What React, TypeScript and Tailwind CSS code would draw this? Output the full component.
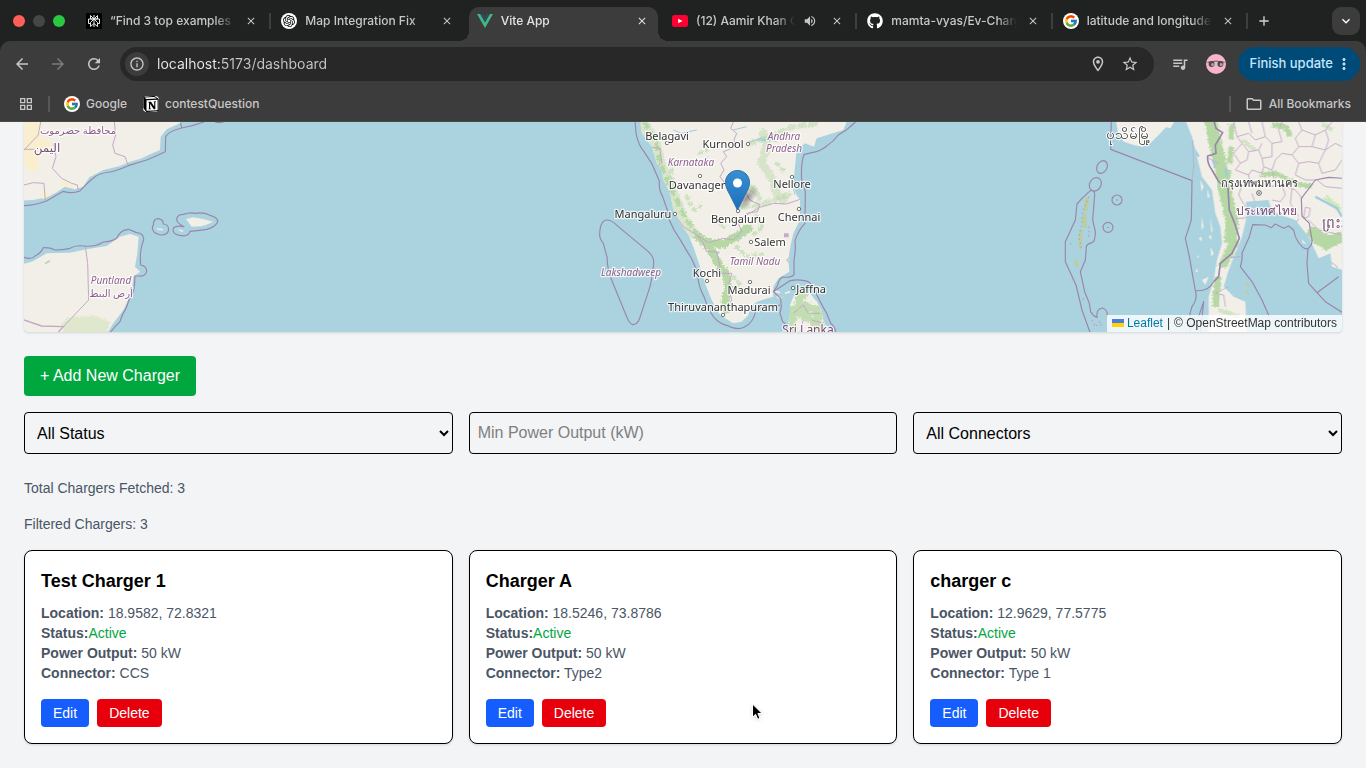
import React, { useState } from "react";
import {
  MdAdd,
  MdArrowBack,
  MdArrowForward,
  MdClose,
  MdExpandMore,
  MdInfoOutline,
  MdMoreVert,
  MdOutlineFolder,
  MdOutlineGridView,
  MdOutlineLocationOn,
  MdQueueMusic,
  MdRefresh,
  MdStarBorder,
  MdVolumeUp,
} from "react-icons/md";
import { FcGoogle } from "react-icons/fc";
import { FaGithub } from "react-icons/fa";
import { SiNotion, SiOpenai } from "react-icons/si";

/* ---------- Browser chrome ---------- */

function GoogleIcon() {
  return (
    <span className="flex size-4 shrink-0 items-center justify-center rounded-full bg-white">
      <FcGoogle className="size-3.5" />
    </span>
  );
}

function PerplexityIcon() {
  return (
    <svg viewBox="0 0 16 16" className="size-4 shrink-0">
      <rect width="16" height="16" rx="1" fill="#000" />
      <g fill="none" stroke="#e8e8e8" strokeWidth="1">
        <path d="M8 2v12M4.500 2.500 8 6l3.500-3.500V6h-7zM2.500 6h11v4.500h-2M4.500 10.500h-2V6M8 6l-3.500 3.500v4L8 10.500l3.500 3V9.500z" />
      </g>
    </svg>
  );
}

function VueIcon() {
  return (
    <svg viewBox="0 0 16 14" className="h-3.5 w-4 shrink-0">
      <path d="M0 0h3.200L8 8.300 12.800 0H16L8 14z" fill="#41b883" />
      <path d="M3.200 0h3L8 3.200 9.800 0h3L8 8.300z" fill="#35495e" />
    </svg>
  );
}

function YouTubeIcon() {
  return (
    <svg viewBox="0 0 16 12" className="h-3 w-4 shrink-0">
      <rect width="16" height="12" rx="2.500" fill="#ff0033" />
      <path d="M6.200 3.800v4.400L10.500 6z" fill="#fff" />
    </svg>
  );
}

type Tab = {
  title: string;
  icon: React.ReactNode;
  active?: boolean;
  audio?: boolean;
  divider?: boolean;
};

const tabs: Tab[] = [
  { title: "“Find 3 top examples of", icon: <PerplexityIcon />, divider: true },
  {
    title: "Map Integration Fix",
    icon: (
      <span className="flex size-4 shrink-0 items-center justify-center rounded-full bg-white">
        <SiOpenai className="size-3 text-black" />
      </span>
    ),
  },
  { title: "Vite App", icon: <VueIcon />, active: true },
  { title: "(12) Aamir Khan On", icon: <YouTubeIcon />, audio: true, divider: true },
  { title: "mamta-vyas/Ev-Charge", icon: <FaGithub className="size-4 shrink-0 text-white" />, divider: true },
  { title: "latitude and longitude", icon: <GoogleIcon />, divider: true },
];

function BrowserTab({ title, icon, active, audio, divider }: Tab) {
  return (
    <div className="flex min-w-0 flex-1 items-center">
      <div
        className={
          active
            ? "relative flex h-[34px] min-w-0 flex-1 items-center rounded-t-[10px] bg-[#3c3c3c] px-2 pb-[7px] text-[#e3e3e3]"
            : "flex h-[34px] min-w-0 flex-1 items-center px-2 pb-[7px] text-[#c7c7c7]"
        }
      >
        {active && (
          <>
            <span className="absolute bottom-0 right-full size-2.5 bg-[radial-gradient(circle_at_0_0,transparent_10px,#3c3c3c_10px)]" />
            <span className="absolute bottom-0 left-full size-2.5 bg-[radial-gradient(circle_at_100%_0,transparent_10px,#3c3c3c_10px)]" />
          </>
        )}
        {icon}
        <button className="mx-2 min-w-0 flex-1 overflow-hidden whitespace-nowrap text-left text-[12px] font-medium leading-4 [mask-image:linear-gradient(to_right,black_calc(100%-20px),transparent)]">
          {title}
        </button>
        {audio && (
          <button aria-label="Mute tab" className="mr-3 shrink-0">
            <MdVolumeUp className="size-3.5" />
          </button>
        )}
        <button aria-label={`Close ${title}`} className="flex size-4 shrink-0 items-center justify-center">
          <MdClose className="size-3" />
        </button>
      </div>
      <span className={divider ? "mx-0.5 mb-[7px] h-4 w-0.5 shrink-0 bg-[#3c3f3e]" : "w-1.5 shrink-0"} />
    </div>
  );
}

function BrowserChrome() {
  const [url, setUrl] = useState("localhost:5173/dashboard");
  return (
    <header className="bg-[#1f2221] font-['Inter',sans-serif]">
      <div className="flex h-[41px] items-end">
        <div className="flex w-[78px] shrink-0 gap-2 self-center pl-[13px]">
          <span className="size-3 rounded-full bg-[#ff5f57]" />
          <span className="size-3 rounded-full bg-[#464646]" />
          <span className="size-3 rounded-full bg-[#28c840]" />
        </div>
        <div className="flex min-w-0 flex-1">
          {tabs.map((t) => (
            <BrowserTab key={t.title} {...t} />
          ))}
        </div>
        <div className="flex w-[116px] shrink-0 items-center justify-between self-center pl-1.5 pr-1.5 text-[#d4d4d4]">
          <button aria-label="New tab">
            <MdAdd className="size-4" />
          </button>
          <button aria-label="Search tabs" className="flex size-7 items-center justify-center rounded-[9px] bg-[#3c3c3c] text-white">
            <MdExpandMore className="size-4" />
          </button>
        </div>
      </div>

      <div className="rounded-t-[10px] border-b border-[#4a4a4a] bg-[#3c3c3c] text-[#c7c7c7]">
        <div className="flex h-[46px] items-center pl-[13px] pr-1.5">
          <button aria-label="Back">
            <MdArrowBack className="size-[18px]" />
          </button>
          <button aria-label="Forward" className="ml-[18px] text-[#7b7b7b]">
            <MdArrowForward className="size-[18px]" />
          </button>
          <button aria-label="Reload" className="ml-[18px]">
            <MdRefresh className="size-[18px]" />
          </button>
          <div className="ml-[17px] flex h-[34px] min-w-0 flex-1 items-center rounded-full bg-[#282828] pl-[5px] pr-[15px]">
            <button aria-label="Site information" className="flex size-6 items-center justify-center rounded-full bg-[#3c3c3c]">
              <MdInfoOutline className="size-4" />
            </button>
            <input
              aria-label="Address"
              value={url}
              onChange={(e) => setUrl(e.target.value)}
              className="ml-2 min-w-0 flex-1 bg-[linear-gradient(90deg,#ececec_64px,#c7c7c7_64px)] bg-clip-text text-[14px] leading-5 text-transparent outline-none"
            />
            <button aria-label="Location access" className="mr-3.5">
              <MdOutlineLocationOn className="size-[18px]" />
            </button>
            <button aria-label="Bookmark this page">
              <MdStarBorder className="size-[18px]" />
            </button>
          </div>
          <button aria-label="Media controls" className="ml-[17px]">
            <MdQueueMusic className="size-[18px]" />
          </button>
          <button aria-label="Profile" className="ml-[17px]">
            <svg viewBox="0 0 20 20" className="size-5">
              <circle cx="10" cy="10" r="10" fill="#f8b4cb" />
              <path d="M1.500 8.300Q10 5.800 18.500 8.300" fill="none" stroke="#4b3b40" strokeWidth="0.800" />
              <circle cx="5.600" cy="10" r="3" fill="#4a4a4a" />
              <circle cx="14.400" cy="10" r="3" fill="#4a4a4a" />
              <circle cx="6.600" cy="10.500" r="1.500" fill="#a8a8a8" />
              <circle cx="15.200" cy="10.500" r="1.500" fill="#a8a8a8" />
            </svg>
          </button>
          <button className="ml-3 flex h-[34px] shrink-0 items-center gap-0.5 rounded-full bg-[#004a77] pl-[11px] pr-[7px] text-[13px] font-medium text-[#c2e7ff]">
            Finish update
            <MdMoreVert className="size-[18px]" />
          </button>
        </div>
        <nav className="flex h-[34px] items-center pl-[18px] pr-[15px] text-[12px] font-medium">
          <button aria-label="Apps">
            <MdOutlineGridView className="size-4" />
          </button>
          <span className="ml-3.5 h-4 w-0.5 bg-[#575757]" />
          <a href="#google" className="ml-3.5 flex items-center gap-1.5">
            <GoogleIcon />
            Google
          </a>
          <a href="#contest" className="ml-4 flex items-center gap-1.5">
            <span className="flex size-4 items-center justify-center rounded-sm bg-white">
              <SiNotion className="size-4 text-black" />
            </span>
            contestQuestion
          </a>
          <span className="ml-auto h-4 w-0.5 bg-[#575757]" />
          <a href="#bookmarks" className="ml-3.5 flex items-center gap-1.5">
            <MdOutlineFolder className="size-[18px]" />
            All Bookmarks
          </a>
        </nav>
      </div>
    </header>
  );
}

/* ---------- Map ---------- */

const LAND = "#f2efe9";
const GREEN = "#b5d8a4";

type Label = {
  x: number;
  y: number;
  text: string;
  kind: "city" | "state" | "country" | "cityLarge" | "stateUpright" | "countryLarge";
};

const labelStyle: Record<Label["kind"], string> = {
  city: "fill-[#333333] text-[11px]",
  cityLarge: "fill-[#333333] text-[14px]",
  state: "fill-[#8d618b] text-[10px] italic",
  stateUpright: "fill-[#8d618b] text-[10px]",
  country: "fill-[#764d75] text-[12px]",
  countryLarge: "fill-[#764d75] text-[14px]",
};

const labels: Label[] = [
  { x: 667, y: 140, text: "Belagavi", kind: "city" },
  { x: 723, y: 148, text: "Kurnool", kind: "city" },
  { x: 784, y: 140, text: "Andhra", kind: "state" },
  { x: 784, y: 152, text: "Pradesh", kind: "state" },
  { x: 691, y: 166, text: "Karnataka", kind: "state" },
  { x: 697, y: 189, text: "Davanager", kind: "city" },
  { x: 792, y: 188, text: "Nellore", kind: "city" },
  { x: 643, y: 218, text: "Mangaluru", kind: "city" },
  { x: 738, y: 223, text: "Bengaluru", kind: "city" },
  { x: 799, y: 221, text: "Chennai", kind: "city" },
  { x: 770, y: 246, text: "Salem", kind: "city" },
  { x: 755, y: 265, text: "Tamil Nadu", kind: "state" },
  { x: 631, y: 276, text: "Lakshadweep", kind: "state" },
  { x: 707, y: 277, text: "Kochi", kind: "city" },
  { x: 749, y: 294, text: "Madurai", kind: "city" },
  { x: 811, y: 293, text: "Jaffna", kind: "city" },
  { x: 723, y: 311, text: "Thiruvananthapuram", kind: "city" },
  { x: 808, y: 334, text: "Sri Lanka", kind: "country" },
  { x: 111, y: 284, text: "Puntland", kind: "state" },
  { x: 111, y: 297, text: "أرض البنط", kind: "stateUpright" },
  { x: 78, y: 134, text: "محافظة حضرموت", kind: "stateUpright" },
  { x: 47, y: 152, text: "اليمن", kind: "country" },
  { x: 1128, y: 139, text: "ပုသိမ်မြို့", kind: "cityLarge" },
  { x: 1259, y: 187, text: "กรุงเทพมหานคร", kind: "city" },
  { x: 1266, y: 215, text: "ประเทศไทย", kind: "country" },
  { x: 1335, y: 228, text: "ព្រះរា", kind: "countryLarge" },
];

const cityDots = [
  [667, 143], [748, 144], [700, 176], [792, 177], [675, 214], [799, 209], [751, 242],
  [707, 281], [750, 282], [793, 288], [723, 315], [738, 211],
];

function LabelText({ x, y, text, kind }: Label) {
  return (
    <text
      x={x}
      y={y}
      textAnchor="middle"
      className={labelStyle[kind]}
      stroke="#ffffff"
      strokeOpacity="0.750"
      strokeWidth="2.500"
      strokeLinejoin="round"
      paintOrder="stroke"
    >
      {text}
    </text>
  );
}

function ChargerMap() {
  return (
    <section aria-label="Charger map" className="relative overflow-hidden rounded-b-sm bg-[#aad3df] shadow">
      <svg
        viewBox="24 122 1318 210"
        preserveAspectRatio="xMidYMid slice"
        className="block h-[210px] w-full font-['Noto_Sans','DejaVu_Sans',sans-serif]"
      >
        <defs>
          <filter id="rough" x="-5%" y="-5%" width="110%" height="110%">
            <feTurbulence type="fractalNoise" baseFrequency="0.180" numOctaves="3" seed="4" />
            <feDisplacementMap in="SourceGraphic" scale="16" xChannelSelector="R" yChannelSelector="G" />
          </filter>
          <filter id="coast" x="-5%" y="-5%" width="110%" height="110%">
            <feTurbulence type="fractalNoise" baseFrequency="0.150" numOctaves="2" seed="9" />
            <feDisplacementMap in="SourceGraphic" scale="4" xChannelSelector="R" yChannelSelector="G" />
          </filter>
          <linearGradient id="pin" x1="0" y1="0" x2="0" y2="1">
            <stop offset="0" stopColor="#3a8fd0" />
            <stop offset="1" stopColor="#1c6fbd" />
          </linearGradient>
          <radialGradient id="pinShadow" cx="0.500" cy="0.500" r="0.500">
            <stop offset="0" stopColor="#000" stopOpacity="0.400" />
            <stop offset="1" stopColor="#000" stopOpacity="0" />
          </radialGradient>
          <clipPath id="indiaClip">
            <path d="M240 0 245 40 275 80 290 130 305 150 310 180 330 220 340 270 360 310 385 345 400 380 420 440 435 490 455 540 480 585 520 610 545 605 565 585 572 560 590 545 640 530 640 500 655 475 688 455 685 420 690 385 700 340 720 300 720 240 705 215 700 190 705 140 710 90 735 70 762 80 770 55 850 30 862 0zM730 508 700 530 690 555 690 580 680 640 808 640 790 600 785 570 770 545 750 520z" />
          </clipPath>
          <clipPath id="thaiClip">
            <path d="M430 0 450 50 465 110 480 170 510 210 520 280 535 320 540 370 525 420 515 480 500 530 500 640H614L610 545 575 530 545 500 560 450 580 400 600 350 612 300 612 245 680 240 690 275 760 300 800 350 830 415 865 400 870 440 902 450V0z" />
          </clipPath>
        </defs>

        {/* Arabian peninsula and Horn of Africa */}
        <g transform="translate(20 120) scale(.33333)" fill="none">
          <g filter="url(#coast)" fill={LAND}>
            <path d="M0 0H495L470 14 440 28 422 50 420 90 400 98 362 116 330 125 300 138 250 150 208 172 190 200 165 208 135 200 108 218 80 232 40 240 0 242z" />
            <path d="M0 434 35 425 60 412 80 400 150 398 200 388 260 378 300 350 330 342 356 350 352 400 345 440 360 455 340 470 335 520 310 570 280 610 260 642H0z" />
            <path d="M498 297 520 292 545 296 580 305 550 318 515 320z" />
            <path d="M410 325 430 327 428 331 412 329zM472 326 492 332 485 336z" />
          </g>
          <g fill="#f9efcf">
            <path d="M12 6H62V50L100 70 82 95 60 100 50 155 30 158 12 130z" />
            <path d="M115 178 150 190 165 200 150 203 130 198zM60 228 80 215 95 225 70 238z" />
          </g>
          <path filter="url(#rough)" fill="#dfe8cc" d="M150 590 230 588 270 605 262 640H130L125 610z" />
          <path d="M75 430 90 422 82 428z" stroke={GREEN} strokeWidth="4" />
          <g stroke="#c3a9c4" strokeWidth="3">
            <path d="M283 6 287 45 278 75 285 100 315 110 325 137" />
            <path d="M100 70 108 110 97 145 125 175 155 190 172 195 175 213" />
            <path d="M12 195 40 188 72 190 76 242M12 90 55 45 62 6M12 88H45" />
            <path d="M196 380 203 430 206 540 130 620" />
            <path d="M12 600 65 618 130 620 115 636" strokeWidth="4" />
          </g>
          <g stroke="#9a86ab" strokeWidth="3.500" strokeLinejoin="round">
            <path d="M556 4Q520 18 485 24Q440 36 437 52L436 95Q415 105 380 120L325 137Q290 152 270 156Q235 160 220 174Q195 195 180 213Q155 222 130 214Q105 228 80 243Q40 257 12 257M482 8 485 24M585 6Q598 10 610 6" />
            <path d="M12 412Q35 420 45 408Q62 400 70 383Q90 382 105 390Q130 390 150 385Q165 375 190 378Q225 382 250 366Q275 365 290 355Q300 330 325 328Q345 336 350 338Q372 340 371 360Q358 390 362 435Q380 438 380 455Q375 470 360 468L345 468Q344 500 340 515Q325 540 318 565Q305 585 300 605Q280 625 272 636" />
            <path d="M400 315Q400 296 415 296Q430 298 430 312Q446 312 446 330Q442 346 422 345Q396 340 397 322z" />
            <path d="M470 298Q472 283 490 283Q510 276 525 280Q550 276 570 286Q594 292 593 306Q585 322 560 328Q530 332 510 334Q505 350 485 347Q458 345 459 328Q462 315 492 320Q470 310 470 298z" />
          </g>
        </g>

        {/* Southern India and Sri Lanka */}
        <g transform="translate(560 120) scale(.33333)" fill="none" strokeLinejoin="round">
          <g filter="url(#coast)">
            <g clipPath="url(#indiaClip)">
              <path fill={LAND} d="M200 0H900V640H200z" />
              <g filter="url(#rough)" stroke={GREEN} strokeLinecap="round">
                <path d="M250 10 285 70 300 130 325 190 345 240 370 300 400 340" strokeWidth="34" strokeOpacity="0.400" />
                <path d="M255 10 290 70 300 130 325 190 350 240 380 300 410 340" strokeWidth="14" strokeDasharray="14 22" />
                <path d="M415 350 450 380 470 420 485 450" strokeWidth="26" strokeDasharray="10 20" />
                <path d="M495 455 505 500 495 545 500 570" strokeWidth="22" />
                <path d="M430 365 490 372 530 350 565 325" strokeWidth="26" strokeDasharray="24 20" />
                <path d="M610 40 620 80 605 130 640 180 650 220 670 240" strokeWidth="26" strokeOpacity="0.450" strokeDasharray="24 18" />
                <path d="M570 70 640 45 700 20 780 10M550 262 600 255 640 240 700 220M540 190 590 215 600 240" strokeWidth="16" strokeOpacity="0.500" strokeDasharray="14 18" />
                <path d="M590 290 610 320 580 345M560 410 620 400M520 470 545 500M380 230 400 270 420 260M340 130 330 170 350 200M540 180 580 200M420 100 440 90M650 130 680 160M530 380 550 400M470 300 500 330" strokeWidth="12" strokeOpacity="0.600" strokeDasharray="6 16" />
                <path d="M735 515 710 545 735 560 770 570 780 620 740 590 700 570 695 630" strokeWidth="28" strokeOpacity="0.800" strokeDasharray="26 24" />
              </g>
              <g stroke="#9fcbe0" strokeWidth="3">
                <path d="M340 30 365 40 410 30M430 120 445 110M560 70 600 55 650 65M520 30 560 20M350 190 365 200M470 400 480 395M530 345 545 355M720 200 712 230M590 60 620 62M700 205 705 225" />
              </g>
              <g stroke="#c3a9c4" strokeWidth="3">
                <path d="M520 6 512 25 530 40 522 60 528 80 490 95 500 110 482 130 492 150 480 170 495 190 520 215 555 215 570 240 600 255 592 275 560 280 545 300" />
                <path d="M262 80 300 85 305 130 290 140M345 285 370 320 410 345 445 368 490 355 520 360 545 335 535 310 560 285 600 262 640 250 680 252 720 238" />
                <path d="M410 345 430 370 440 395 470 395 480 440 470 460 515 460 505 500 515 540 490 585M690 410 680 420 688 430" />
                <path d="M700 580 730 555 745 580 780 580M730 600 720 636M755 600 790 610" />
              </g>
              <path d="M672 340h14v12h-14z" fill="#c9a9c4" />
            </g>
          </g>
          <path d="M640 512 660 518M675 520 690 515M650 530 665 535" stroke={LAND} strokeWidth="5" />
          <g stroke="#9a86ab" strokeWidth="3.500">
            <path d="M225 0 228 40Q235 75 252 95L275 130 298 183Q296 210 308 230L322 270 328 300Q340 330 360 358L385 400Q405 430 413 465Q415 500 432 530Q445 570 462 592Q480 612 500 616Q530 632 552 622Q580 610 588 570Q605 560 635 558L660 556" />
            <path d="M892 0Q870 25 835 45Q820 65 800 78Q780 95 755 98L732 104Q722 130 725 180L736 215 735 310Q715 330 705 362Q708 390 702 420V464Q695 474 668 471Q655 480 652 498L640 515 662 535 664 560 660 580 668 605 680 615V636" />
            <path d="M640 515Q665 498 690 482Q720 476 745 485Q765 500 772 528Q785 555 800 580Q808 600 812 610Q825 620 828 640" />
            <path d="M119 343Q120 300 142 300Q155 300 175 320L265 395Q282 412 281 425Q281 450 270 500L238 598Q230 615 218 614Q207 610 200 590L155 480Q140 440 142 415L130 370Q118 355 119 343z" />
          </g>
        </g>

        {/* Andaman Sea, Myanmar and Thailand */}
        <g transform="translate(1042 120) scale(.33333)" fill="none" strokeLinejoin="round">
          <g filter="url(#coast)">
            <path fill={LAND} d="M222 0 228 40 245 65 275 75 300 80 325 70 350 45 372 22 385 25 400 0z" />
            <g clipPath="url(#thaiClip)">
              <path fill={LAND} d="M420 0H910V640H420z" />
              <g filter="url(#rough)" stroke={GREEN}>
                <path d="M505 0 520 70 535 130 545 200 560 260 570 310 565 370" strokeWidth="38" />
                <path d="M570 10 565 120 550 220" strokeWidth="16" strokeDasharray="50 20" />
                <path d="M580 360 560 400 540 440" strokeWidth="26" />
                <path d="M530 470 525 500 520 560" strokeWidth="20" />
                <path d="M655 165 700 160 760 190 810 200" strokeWidth="14" />
                <path d="M690 15 730 20 745 50" strokeWidth="16" />
                <path d="M810 345 850 370 900 350M800 330 850 360 865 385" strokeWidth="34" />
                <path d="M530 570 590 590M840 10 870 30M640 90 600 60" strokeWidth="12" strokeOpacity="0.500" />
                <path d="M850 230 895 270" strokeWidth="14" stroke="#cfe8b8" />
              </g>
              <g stroke="#9fcbe0" strokeWidth="7">
                <path d="M455 85 470 110M550 145 555 170M512 120 520 140M820 230 885 265 900 290M640 250 675 250" />
              </g>
              <g stroke="#c8b0c9" strokeWidth="3">
                <path d="M575 6 585 50 600 70 575 100 595 130 580 150 620 165 630 150 660 160 665 140 690 150 700 120 720 100 750 105 770 80 760 55 780 30 770 6" />
                <path d="M585 50 620 40 640 60 670 50 690 70 720 65 710 30 720 6M620 6 630 40M660 6 670 50M600 70 620 95 650 90 660 70M620 95 615 120 595 130M650 90 660 115 690 110 690 70M660 115 665 140" />
                <path d="M780 30 820 45 850 30 870 6M820 45 810 80 770 80M810 80 850 90 880 70 900 80M850 30 860 60 850 90M850 90 830 130 840 160 880 150 900 120" />
                <path d="M560 200 600 195 630 200 650 180 680 200 720 195 760 210 780 235M600 195 590 225 610 260M720 195 730 225 715 245 690 240M750 205 745 250 770 290M620 165 625 200M690 150 700 190M750 105 770 130 800 125 830 130M770 130 760 165 790 180 825 180" />
                <path d="M630 220 640 250 680 255M570 410 600 412M580 297 615 293M520 520 545 525 550 560M575 500 605 490 605 470M530 130 500 115M825 180 850 200 900 205M790 262 805 265 800 290 785 295zM800 300 830 330 900 345M860 420 885 440 890 470" />
                <path d="M632 316 645 262M685 320 680 255M720 315 715 290M755 325 770 295" />
              </g>
            </g>
            <g fill={LAND}>
              <path d="M475 180 485 200 478 215zM495 205 503 230 497 235zM480 290 485 320 478 330zM470 355 478 350 480 365zM505 290 512 330 508 340zM465 410 470 405 470 415zM505 380 515 400 508 410zM460 455 465 445 468 455zM480 480 500 470 490 495zM500 350 508 345 508 360zM520 440 528 450 520 460z" />
              <path d="M770 335 778 345M780 358 792 372 782 370z" />
            </g>
          </g>
          <g filter="url(#coast)" stroke="#b9cfa0" strokeLinecap="round">
            <path d="M135 238 132 268M127 287 128 318" strokeWidth="13" />
            <path d="M117 332 115 383M103 422 105 438" strokeWidth="10" />
            <path d="M615 490 618 500M612 515 618 520" strokeWidth="7" />
          </g>
          <g stroke="#bd9cb4" strokeWidth="4" strokeDasharray="4 9">
            <path d="M140 230 122 275 118 320 110 350 118 385M140 320 142 345 135 355M85 370 90 375M122 535 125 542M150 600 160 620 175 605 180 625" />
          </g>
          <g stroke="#9a86ab" strokeWidth="3.500">
            <path d="M208 0 206 88 450 182 448 300 430 355 442 410 460 512Q500 515 515 485M460 512Q468 535 450 560Q440 590 445 600V640M475 640 485 545 470 590" />
            <path d="M145 212 120 235 105 252 100 300 70 365V425L102 495 120 570 145 640M145 212Q158 208 158 225L152 300 160 335Q160 365 150 368Q135 372 133 380L130 420 115 455 128 515 142 550 146 575Q155 590 165 592 162 565 182 564 198 570 196 590" />
            <ellipse cx="180" cy="141" rx="15" ry="20" transform="rotate(28 180 141)" />
            <ellipse cx="160" cy="193" rx="17" ry="21" transform="rotate(30 160 193)" />
            <circle cx="225" cy="240" r="15" />
            <circle cx="198" cy="322" r="15" />
            <path d="M682 590 660 540 632 488 595 440Q602 420 600 400L622 350 632 314 670 315 688 323 700 312 725 325 740 318 755 330Q760 360 780 380Q795 392 802 382 815 370 808 350L802 310 780 288 778 235 820 180 860 172 902 175M798 384 795 430 800 490 825 518 850 545 902 578M825 518 890 470" />
            <path d="M515 0 522 25 542 38 520 75 522 100 497 108Q495 130 510 150L530 185 558 205 562 270 578 310 592 355 570 400 535 430 530 470 515 485" strokeWidth="5" />
            <path d="M452 60 455 140 450 182M520 520 560 500M555 415 595 410" strokeWidth="2" stroke="#b9a6c2" />
          </g>
          <g fill="#8f7ba0">
            <circle cx="225" cy="240" r="2" />
            <circle cx="198" cy="322" r="2" />
          </g>
          <circle cx="651" cy="219" r="7" stroke="#444" strokeWidth="2.500" fill="#fff" />
          <circle cx="651" cy="219" r="2.500" fill="#444" />
        </g>

        {cityDots.map(([x, y]) => (
          <circle key={`${x}-${y}`} cx={x} cy={y} r="1.700" fill="#fff" stroke="#555" strokeWidth="0.800" />
        ))}
        {labels.map((l) => (
          <LabelText key={l.text} {...l} />
        ))}

        <ellipse cx="747" cy="198" rx="16" ry="7" fill="url(#pinShadow)" transform="rotate(-48 747 198)" />
        <path
          d="M737.500 170.500c-6.700 0-12 5.300-12 12 0 4.500 2 7.800 4 11.500l8 16 8-16c2-3.700 4-7 4-11.500 0-6.700-5.300-12-12-12z"
          fill="url(#pin)"
          stroke="#2a6fa8"
          strokeWidth="1"
        />
        <circle cx="737.500" cy="183" r="4.500" fill="#fff" />
      </svg>

      <div className="absolute bottom-0 right-0 flex items-center bg-white/80 px-[5px] pb-px text-[12px] leading-4 text-[#333333]">
        <svg viewBox="0 0 12 8" className="mr-[3px] h-2 w-3">
          <path fill="#4c7be1" d="M0 0h12v4H0z" />
          <path fill="#ffd500" d="M0 4h12v4H0z" />
        </svg>
        <a href="#leaflet" className="text-[#0078a8]">
          Leaflet
        </a>
        <span className="mx-1">|</span>
        <span>© OpenStreetMap contributors</span>
      </div>
    </section>
  );
}

/* ---------- Dashboard ---------- */

const chargers = [
  { name: "Test Charger 1", location: "18.9582, 72.8321", status: "Active", power: 50, connector: "CCS" },
  { name: "Charger A", location: "18.5246, 73.8786", status: "Active", power: 50, connector: "Type2" },
  { name: "charger c", location: "12.9629, 77.5775", status: "Active", power: 50, connector: "Type 1" },
];

function ChargerCard({ charger }: { charger: (typeof chargers)[number] }) {
  return (
    <article className="rounded-lg border border-black bg-white p-4 shadow">
      <h3 className="mb-2 text-lg font-bold text-black">{charger.name}</h3>
      <div className="text-sm text-gray-600">
        <p>
          <strong>Location:</strong> {charger.location}
        </p>
        <p>
          <strong>Status:</strong>
          <span className="text-green-600">{charger.status}</span>
        </p>
        <p>
          <strong>Power Output:</strong> {charger.power} kW
        </p>
        <p>
          <strong>Connector:</strong> {charger.connector}
        </p>
      </div>
      <div className="mt-4 flex gap-2 text-sm text-white">
        <button className="rounded bg-blue-600 px-3 py-1">Edit</button>
        <button className="rounded bg-red-600 px-3 py-1">Delete</button>
      </div>
    </article>
  );
}

export default function App() {
  return (
    <div className="relative flex min-h-screen flex-col bg-gray-100 font-['Liberation_Sans',Arial,sans-serif]">
      <BrowserChrome />
      <main className="px-6 pb-6">
        <ChargerMap />
        <button className="mt-6 rounded bg-green-600 px-4 py-2 text-white">+ Add New Charger</button>
        <div className="mt-4 grid grid-cols-3 gap-4">
          <select aria-label="Status" className="rounded border border-black p-2 text-black">
            <option>All Status</option>
            <option>Active</option>
            <option>Inactive</option>
          </select>
          <input
            aria-label="Minimum power output"
            placeholder="Min Power Output (kW)"
            className="min-w-0 rounded border border-black p-2 placeholder:text-[#808080]"
          />
          <select aria-label="Connector" className="rounded border border-black p-2 text-black">
            <option>All Connectors</option>
            <option>CCS</option>
            <option>Type2</option>
            <option>Type 1</option>
          </select>
        </div>
        <p className="mt-6 text-sm text-gray-600">Total Chargers Fetched: {chargers.length}</p>
        <p className="mt-4 text-sm text-gray-600">Filtered Chargers: {chargers.length}</p>
        <div className="mt-4 grid grid-cols-3 gap-4">
          {chargers.map((c) => (
            <ChargerCard key={c.name} charger={c} />
          ))}
        </div>
      </main>
      <svg viewBox="0 0 12 18" className="pointer-events-none absolute left-[751px] top-[703px] h-[18px] w-3 drop-shadow">
        <path
          d="M1.500 1v13.200l3.100-2.900 2.100 5 2.300-1-2.100-4.800h4.200z"
          fill="#000"
          stroke="#fff"
          strokeWidth="1"
          strokeLinejoin="round"
        />
      </svg>
    </div>
  );
}
